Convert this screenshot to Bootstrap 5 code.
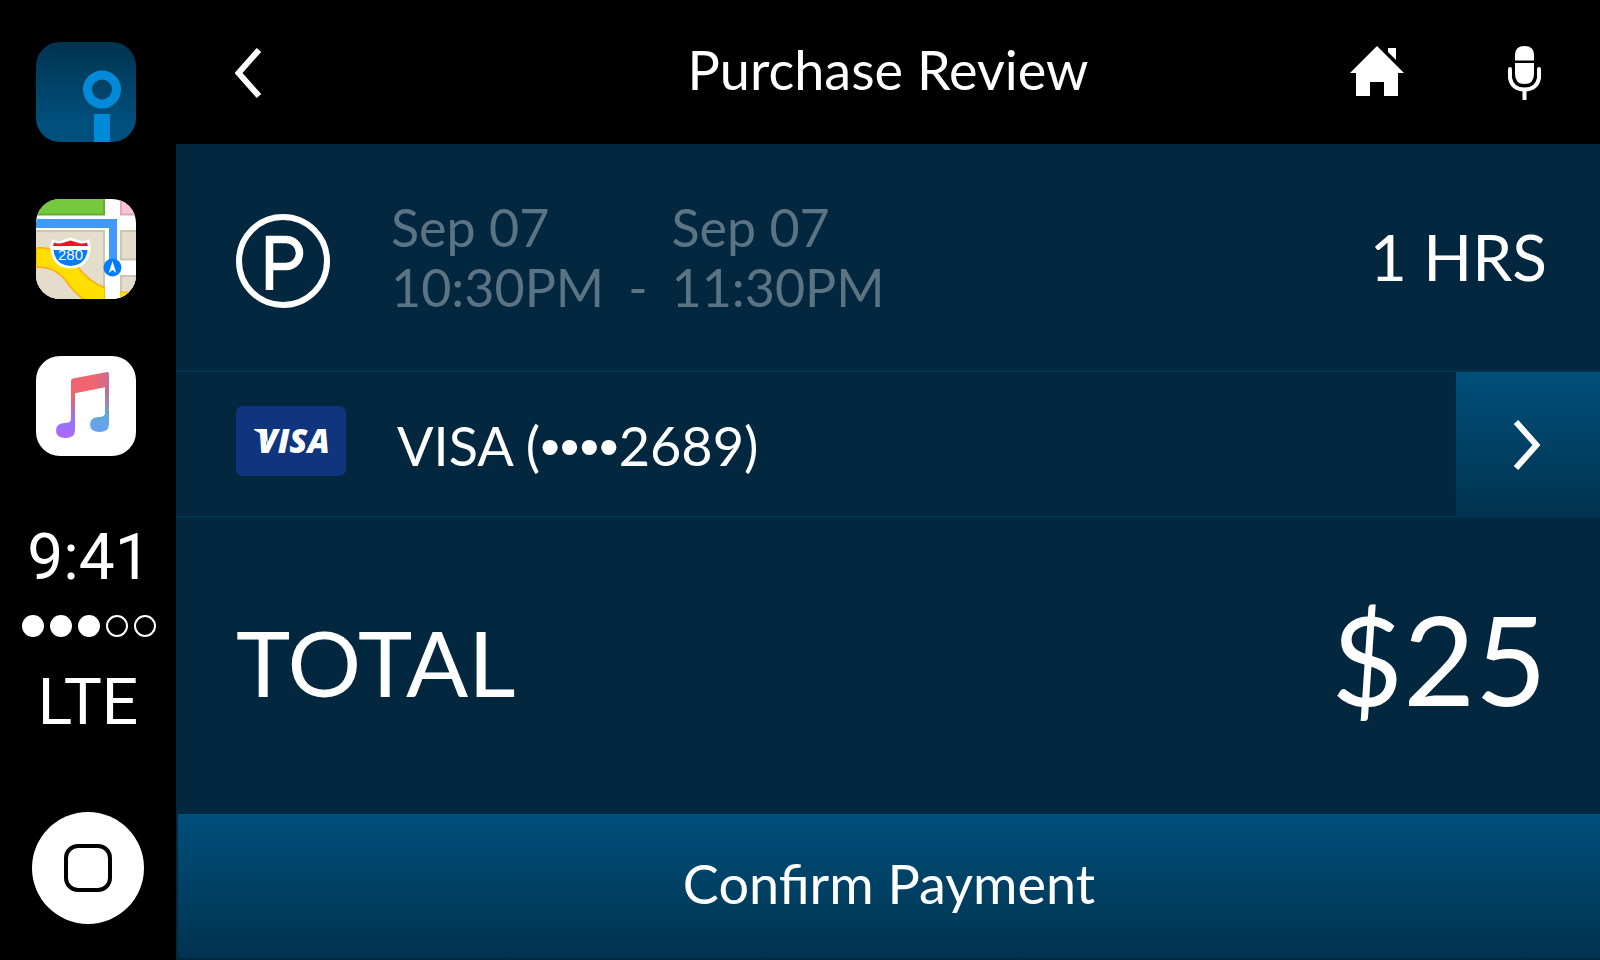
<!DOCTYPE html>
<html lang="en">
<head>
<meta charset="utf-8">
<meta name="viewport" content="width=device-width, initial-scale=1">
<title>Purchase Review</title>
<link rel="stylesheet" href="https://cdn.jsdelivr.net/npm/bootstrap@5.3.0/dist/css/bootstrap.min.css">
<style>
  body { background: #000; color: #fff; font-family: Lato, "Open Sans", sans-serif; line-height: 1; }
  svg { display: block; }
  .btn.plain, .btn.blue { --bs-btn-padding-x: 0; --bs-btn-padding-y: 0; --bs-btn-border-width: 0; --bs-btn-border-radius: 0; --bs-btn-line-height: 1; --bs-btn-color: #fff; --bs-btn-hover-color: #fff; --bs-btn-active-color: #fff; }
  .side-rail { width: 176px; padding: 42px 0 36px; font-family: Roboto, "Liberation Sans", sans-serif; }
  .apps { gap: 57px; padding-right: 4px; }
  .clock, .network { font-size: 64px; line-height: 64px; font-weight: 400; }
  .clock { margin-top: 70px; padding-left: 2px; }
  .signal { gap: 6px; margin: 25px 0 34px 2px; }
  .signal i { width: 22px; height: 22px; border: 2px solid #fff; border-radius: 50%; }
  .signal i.on { background: #fff; }
  .panel { background: #03273f; }
  .top-bar { height: 144px; background: #000; padding: 2px 59px 0; }
  .top-bar .end { flex: 1 1 0; }
  .title-text, .card-text-line, .btn.confirm { font-size: 54px; line-height: 64px; font-weight: 400; }
  .title-text { padding-bottom: 6px; }
  .icons { gap: 104px; }
  .booking { height: 226px; padding: 8px 53px 0 60px; }
  .times { font-size: 52px; line-height: 60px; color: #5a7484; margin-left: 61px; gap: 24px; padding-bottom: 8px; }
  .hours { font-size: 64px; line-height: 72px; padding-bottom: 8px; }
  .method { height: 148px; border: solid #00334e; border-width: 2px 0; padding-left: 60px; }
  .card-logo { padding-bottom: 6px; }
  .card-text-line { margin-left: 51px; padding-top: 4px; }
  .masked { font-family: "Liberation Sans", sans-serif; font-size: 56px; line-height: 1; }
  .btn.blue { background: linear-gradient(#004f7b, #00334f); }
  .btn.more { width: 144px; padding: 2px 4px 0 0; }
  .sum { padding: 0 53px 8px 60px; }
  .sum-label { font-size: 92px; line-height: 100px; }
  .sum-value { font-size: 124px; line-height: 136px; padding-bottom: 8px; }
  .btn.confirm { height: 144px; margin: 0 0 2px 2px; padding-bottom: 4px; }
</style>
</head>
<body>
<div class="d-flex min-vh-100">
  <aside class="side-rail d-flex flex-column align-items-center flex-shrink-0">
    <nav class="apps d-flex flex-column" aria-label="Apps">
      <button class="btn plain" type="button" aria-label="Parking">
        <svg width="100" height="100" viewBox="0 0 100 100">
          <defs><linearGradient id="g1" x1="0" y1="0" x2="0" y2="1"><stop offset="0" stop-color="#00334e"/><stop offset=".8" stop-color="#00507d"/></linearGradient></defs>
          <rect width="100" height="100" rx="24" fill="url(#g1)"/>
          <circle cx="66" cy="47.500" r="14.500" fill="none" stroke="#008ad8" stroke-width="9"/>
          <path d="M58 72h16v28H58z" fill="#008ad8"/>
        </svg>
      </button>
      <button class="btn plain" type="button" aria-label="Maps">
        <svg width="100" height="100" viewBox="0 0 100 100">
          <clipPath id="c"><rect width="100" height="100" rx="24"/></clipPath>
          <g clip-path="url(#c)">
            <path d="M0 0h100v100H0z" fill="#fff"/>
            <path d="M0 0h69v16.500H0z" fill="#63ad31"/><path d="M0 0h67v14.500H0z" fill="#76c83c"/>
            <path d="M84 0h16v16.500H84z" fill="#dba9b8"/><path d="M86 0h14v14.500H86z" fill="#fac3d2"/>
            <path d="M0 31h69v69H0z" fill="#cbc5b5"/><path d="M0 33h67v67H0z" fill="#e4ddcb"/>
            <path d="M84 31h16v30.500H84z" fill="#cbc5b5"/><path d="M86 33h14v26.500H86z" fill="#e4ddcb"/>
            <path d="M84 76h16v24H84z" fill="#cbc5b5"/><path d="M86 78h14v22H86z" fill="#e4ddcb"/>
            <path d="M0 49Q9 48 17 51L42 68Q52 82 69 89V102H50Q38 94 30 82Q18 67 0 68.500z" fill="#ffde00" stroke="#ffaa18" stroke-width="1.500"/>
            <path d="M84 93h18v10H84z" fill="#ffde00" stroke="#ffaa18"/>
            <path d="M69 31h15v69H69z" fill="#fff"/>
            <path d="M0 20h81v42h-8V29H0z" fill="#4099ff"/>
            <path d="M16.500 40q5 4 10 1l8-2.500 8 2.500q5 3 10-1q3 5 2 11q-2 18-20 18.500Q17 69 14.500 51Q13.500 45 16.500 40z" fill="#fff"/>
            <path d="M18 43.500q5 2 10 0l6.500-2 6.500 2q5 2 10 0l1 3.500H17z" fill="#de1c27"/>
            <path d="M17.500 51h34q-1.500 15-17 16Q19 66 17.500 51z" fill="#007dff"/>
            <text x="34.500" y="60.500" text-anchor="middle" font-family="Liberation Sans, sans-serif" font-size="15" fill="#fff">280</text>
            <circle cx="76.500" cy="68.500" r="9" fill="#007dff"/>
            <path d="M76.500 62l3.800 12-3.800-3-3.800 3z" fill="#fff"/>
          </g>
        </svg>
      </button>
      <button class="btn plain" type="button" aria-label="Music">
        <svg width="100" height="100" viewBox="0 0 100 100">
          <defs><linearGradient id="g2" x1="0" y1="0" x2="0" y2="1"><stop offset=".25" stop-color="#f06470"/><stop offset=".7" stop-color="#9372ff"/><stop offset="1" stop-color="#b06af0"/></linearGradient>
          <linearGradient id="g3" x1="0" y1="0" x2="0" y2="1"><stop offset="0" stop-color="#e8667c"/><stop offset=".25" stop-color="#c46c92"/><stop offset=".7" stop-color="#60a8dc"/><stop offset="1" stop-color="#68a0f4"/></linearGradient>
          <linearGradient id="g4"><stop offset=".55" stop-color="#f06470"/><stop offset="1" stop-color="#cf6b90"/></linearGradient></defs>
          <rect width="100" height="100" rx="24" fill="#fff"/>
          <path d="M35 26h4v48q0 8-9.500 8-9.500 0-9.500-7.500 0-7.500 9-7.500 6 0 6-4z" fill="url(#g2)"/>
          <path d="M69 20h4v48q0 8-9.500 8-9.500 0-9.500-7.500 0-7.500 9-7.500 6 0 6-4z" fill="url(#g3)"/>
          <path d="M35 25q0-2 2-2.400l34-6.500q2-.3 2 2V32l-4-.8-30 6.100V40h-4z" fill="url(#g4)"/>
        </svg>
      </button>
    </nav>
    <div class="clock">9:41</div>
    <div class="signal d-flex" role="img" aria-label="Signal 3 of 5"><i class="on"></i><i class="on"></i><i class="on"></i><i></i><i></i></div>
    <div class="network">LTE</div>
    <button class="btn plain mt-auto" type="button" aria-label="Home screen">
      <svg width="112" height="112" viewBox="0 0 112 112"><circle cx="56" cy="56" r="56" fill="#fff"/><rect x="34" y="34" width="44" height="44" rx="12" fill="none" stroke="#000" stroke-width="4"/></svg>
    </button>
  </aside>
  <main class="panel d-flex flex-column flex-grow-1">
    <header class="top-bar d-flex align-items-center">
      <div class="end"><button class="btn plain" type="button" aria-label="Back"><svg width="27" height="50" viewBox="0 0 27 50"><path d="M24 2L3.500 25 24 48" fill="none" stroke="#fff" stroke-width="6"/></svg></button></div>
      <h1 class="title-text m-0">Purchase Review</h1>
      <div class="icons end d-flex justify-content-end">
        <button class="btn plain" type="button" aria-label="Home"><svg width="54" height="54" viewBox="0 0 54 54"><path d="M27 0l27 27h-6v23H34V36H20v14H6V27H0zM38 2h8v12l-8-8z" fill="#fff"/></svg></button>
        <button class="btn plain" type="button" aria-label="Voice"><svg width="33" height="54" viewBox="0 0 33 54"><path d="M7 14.500V9q0-9 9.500-9T26 9v5.500zM7 17h19v11q0 10-9.500 10T7 28z" fill="#fff"/><path d="M2 23v9q2 11.500 14.500 11.500T31 32v-9" fill="none" stroke="#fff" stroke-width="4" stroke-linecap="round"/><path d="M14.500 43h4v11h-4z" fill="#fff"/></svg></button>
      </div>
    </header>
    <section class="booking d-flex align-items-center">
      <svg width="94" height="94" viewBox="0 0 94 94" role="img" aria-label="Parking"><circle cx="47" cy="47" r="44" fill="none" stroke="#fff" stroke-width="6"/><path d="M33.500 76V25.500H50a13.500 13.500 0 0 1 0 27H33.500" fill="none" stroke="#fff" stroke-width="7.500"/></svg>
      <div class="times d-flex align-items-end"><div>Sep 07<br>10:30PM</div><div>-</div><div>Sep 07<br>11:30PM</div></div>
      <div class="hours ms-auto">1 HRS</div>
    </section>
    <section class="method d-flex align-items-center">
      <div class="card-logo"><svg width="110" height="70" viewBox="0 0 110 70" role="img" aria-label="Visa"><rect width="110" height="70" rx="7" fill="#10357f"/><text x="57.500" y="47" text-anchor="middle" font-family="Open Sans, sans-serif" font-weight="800" font-style="italic" font-size="33" fill="#fff">VISA</text><path d="M18 23h13l1 17q-2-11-14-16z" fill="#fff"/></svg></div>
      <div class="card-text-line">VISA (<span class="masked">••••</span>2689)</div>
      <button class="btn blue more ms-auto align-self-stretch d-flex align-items-center justify-content-center" type="button" aria-label="Change card"><svg width="27" height="50" viewBox="0 0 27 50"><path d="M3 2l20.500 23L3 48" fill="none" stroke="#fff" stroke-width="6"/></svg></button>
    </section>
    <section class="sum d-flex align-items-center justify-content-between flex-grow-1">
      <div class="sum-label">TOTAL</div>
      <div class="sum-value">$25</div>
    </section>
    <button class="btn blue confirm" type="button">Confirm Payment</button>
  </main>
</div>
<script src="https://cdn.jsdelivr.net/npm/bootstrap@5.3.0/dist/js/bootstrap.bundle.min.js"></script>
</body>
</html>
